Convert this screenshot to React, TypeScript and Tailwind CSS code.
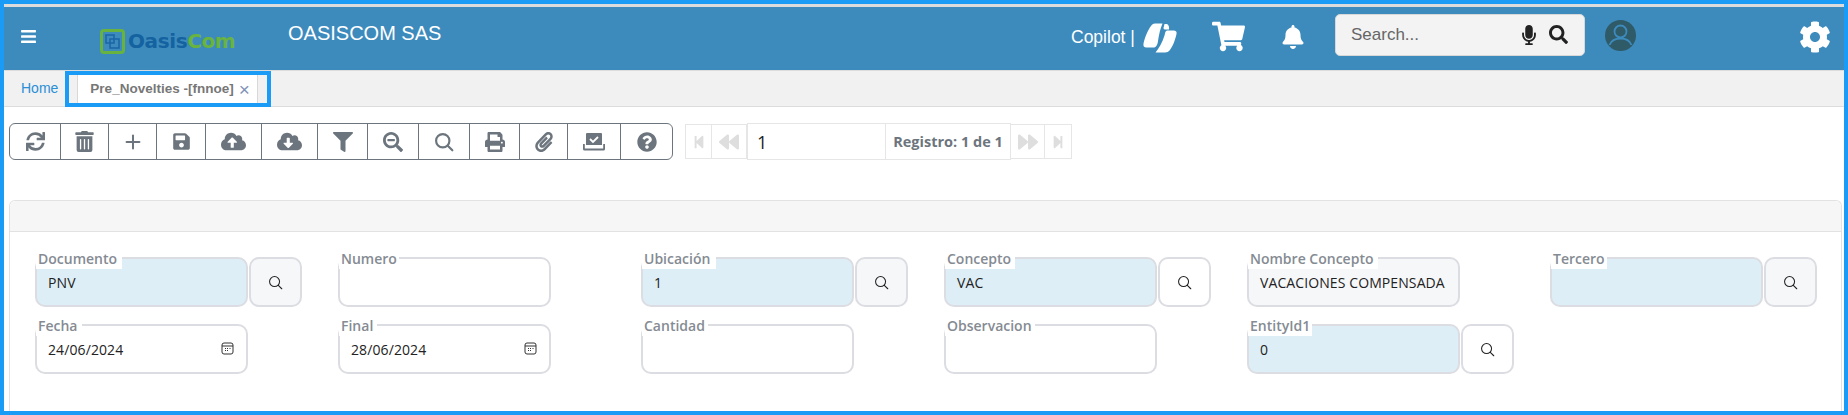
import React from "react";
import {
  FaBars, FaBell, FaShoppingCart, FaCog, FaSearch, FaMicrophone, FaSync, FaTrashAlt, FaSave,
  FaCloudUploadAlt, FaCloudDownloadAlt, FaFilter, FaSearchMinus, FaPrint, FaPaperclip, FaQuestionCircle,
  FaStepBackward, FaBackward, FaForward, FaStepForward,
} from "react-icons/fa";
import { Plus } from "lucide-react";

const Loupe = ({ size = 16, w = 2.4 }: { size?: number; w?: number }) => (
  <svg width={size} height={size} viewBox="0 0 24 24" fill="none" stroke="currentColor" strokeWidth={w} strokeLinecap="round">
    <circle cx="10.5" cy="10.5" r="8" />
    <path d="M16.5 16.5 22 22" />
  </svg>
);

const CheckTray = () => (
  <svg width="24" height="20" viewBox="0 0 24 20" fill="currentColor">
    <path d="M5 1h14a1 1 0 0 1 1 1v11H4V2a1 1 0 0 1 1-1z" />
    <path d="M8 7l3 3 5-5" fill="none" stroke="#fff" strokeWidth="1.8" />
    <path d="M1 12v5a1.5 1.5 0 0 0 1.5 1.5h19A1.5 1.5 0 0 0 23 17v-5h-1.8v4.5H2.8V12z" />
  </svg>
);

const Calendar = () => (
  <svg width="13" height="13" viewBox="0 0 13 13" fill="none" stroke="#333" strokeWidth="1">
    <rect x="1" y="1" width="11" height="11" rx="2" />
    <path d="M1 4h11" />
    <path d="M4 6.5h1M6 6.5h1M8.5 6.5h1M4 8.5h1M6 8.5h1" strokeWidth="1.2" />
  </svg>
);

const Copilot = () => (
  <svg width="34" height="30" viewBox="0 0 34 30" fill="#fff">
    <path d="M8 3C9 1.500 10 .5 12 .5h7.500C17.500 5 16 11 15 18c-.5 4-2 6.500-4.500 6.500H3.500C1 24.500 0 23 .5 20.500 2 13.500 5 7 8 3z" />
    <path d="M24 7.500h6.500c2.500 0 3.500 1.500 3 3.500-1.500 6.500-4 13-7 16.500-1 1.200-2.500 2-4.500 2h-9.500c3-4 7-10 9-17 .5-2.500 1-5 2.500-5z" />
    <path d="M21.500 1H23c2 0 3.500 2 3 5.500h-3.500c-1 0-2 0-2-1.500z" />
  </svg>
);

const User = () => (
  <svg width="31" height="31" viewBox="0 0 31 31">
    <circle cx="15.5" cy="15.5" r="15.5" fill="#2f5a68" />
    <circle cx="15.5" cy="11.5" r="6" fill="none" stroke="#3d8bbd" strokeWidth="1.8" />
    <path d="M4.5 25c2-5 6-6.500 11-6.500s9 1.500 11 6.500" fill="none" stroke="#3d8bbd" strokeWidth="1.8" />
  </svg>
);

const tools: [number, React.ReactNode][] = [
  [51, <FaSync size={19} />],
  [48, <FaTrashAlt size={21} />],
  [48, <Plus size={22} strokeWidth={2.2} />],
  [49, <FaSave size={19} />],
  [56, <FaCloudUploadAlt size={25} />],
  [56, <FaCloudDownloadAlt size={25} />],
  [50, <FaFilter size={20} />],
  [51, <FaSearchMinus size={20} />],
  [51, <Loupe size={20} w={2.6} />],
  [50, <FaPrint size={20} />],
  [48, <FaPaperclip size={20} />],
  [53, <CheckTray />],
  [51, <FaQuestionCircle size={20} />],
];

type F = { label: string; value?: string; blue?: boolean; gray?: boolean; search?: boolean; btnGray?: boolean; date?: boolean; labelW: number };

const rows: (F | null)[] = [
  { label: "Documento", value: "PNV", blue: true, search: true, btnGray: true, labelW: 86 },
  { label: "Numero", labelW: 60 },
  { label: "Ubicación", value: "1", blue: true, search: true, btnGray: true, labelW: 74 },
  { label: "Concepto", value: "VAC", blue: true, search: true, labelW: 70 },
  { label: "Nombre Concepto", value: "VACACIONES COMPENSADA", gray: true, labelW: 130 },
  { label: "Tercero", blue: true, search: true, btnGray: true, labelW: 56 },
  { label: "Fecha", value: "24/06/2024", date: true, labelW: 46 },
  { label: "Final", value: "28/06/2024", date: true, labelW: 38 },
  { label: "Cantidad", labelW: 66 },
  { label: "Observacion", labelW: 90 },
  { label: "EntityId1", value: "0", blue: true, search: true, labelW: 64 },
  null,
];

function Field({ f }: { f: F }) {
  return (
    <div className="flex">
      <div
        className={`relative flex h-[50px] w-[213px] items-center overflow-hidden rounded-[10px] border-2 border-[#dcdde2] pl-[11px] ${
          f.blue ? "bg-[#deeef6]" : f.gray ? "bg-[#f6f7f9]" : "bg-white"
        }`}
      >
        <span className="whitespace-nowrap pt-[1px] text-[14px] tracking-[0.1px] text-[#222]">{f.value}</span>
        {f.date && (
          <span className="absolute right-[12px] top-[16px]">
            <Calendar />
          </span>
        )}
      </div>
      <span className="absolute left-[1px] top-[-1px] h-[13px] bg-white" style={{ width: f.labelW }} />
      <span className="absolute left-[3px] top-[-8px] text-[14px] font-semibold leading-[20px] text-[#858b93]">{f.label}</span>
      {f.search && (
        <div
          className={`ml-[1px] flex h-[50px] w-[53px] items-center justify-center rounded-[10px] border-2 border-[#dcdde2] text-[#222] ${
            f.btnGray ? "bg-[#f6f7f9]" : "bg-white"
          }`}
        >
          <Loupe size={15} w={1.7} />
        </div>
      )}
    </div>
  );
}

export default function App() {
  return (
    <div className="flex h-[415px] w-[1848px] flex-col overflow-hidden border-4 border-[#1a9bf5] bg-white font-['Open_Sans',sans-serif]">
      <div className="h-[3px] bg-[#dcdcdc]" />
      <header className="flex h-[63px] items-center bg-[#3d8bbd] pl-[16px] text-white">
        <FaBars size={17} className="mr-[63px] mt-[-4px]" />
        <div className="mr-[52px] mt-[5px] flex w-[136px] items-center">
          <div className="mr-[3px] flex h-[25px] w-[25px] shrink-0 items-center justify-center rounded-[4px] border-[3px] border-[#68b23f]">
            <svg width="15" height="15" viewBox="0 0 15 15" fill="none" stroke="#1c66a8" strokeWidth="1.6">
              <rect x="1" y="1" width="8" height="8" />
              <rect x="5" y="5" width="9" height="9" />
            </svg>
          </div>
          <span className="font-['DejaVu_Sans',sans-serif] text-[20px] font-bold leading-none tracking-[-0.4px]">
            <span className="text-[#14629f]">Oasis</span>
            <span className="text-[#69b340]">Com</span>
          </span>
        </div>
        <div className="mt-[-12px] w-[783px] font-['Liberation_Sans',sans-serif] text-[20px]">OASISCOM SAS</div>
        <div className="mt-[-2px] flex w-[141px] items-center font-['Liberation_Sans',sans-serif] text-[17.5px]">
          <span className="mr-[8px]">Copilot |</span>
          <Copilot />
        </div>
        <FaShoppingCart size={33} className="mr-[36px] mt-[-4px]" />
        <FaBell size={24} className="mr-[30px] mt-[-4px]" />
        <div className="mb-[8px] flex h-[42px] w-[250px] items-center rounded-[5px] border border-[#d8d8d8] bg-[#f3f3f3] pl-[15px] pr-[16px] text-[#222]">
          <span className="flex-1 font-['Liberation_Sans',sans-serif] text-[17px] text-[#666]">Search...</span>
          <FaMicrophone size={20} className="mr-[10px]" />
          <FaSearch size={19} />
        </div>
        <div className="mb-[6px] ml-[20px] mr-[163px]">
          <User />
        </div>
        <FaCog size={32} className="mt-[-4px]" />
      </header>
      <div className="h-px bg-[#dcdcdc]" />
      <nav className="flex h-[36px] border-b border-[#dcdcdc] bg-[#f1f1f1] font-['Liberation_Sans',sans-serif]">
        <a className="ml-[17px] mr-[7px] flex items-center pb-[1px] text-[14px] text-[#2a8fd6]">Home</a>
        <div className="flex h-[36px] w-[206px] border-4 border-[#1a9bf5] pl-[8px] pr-[9px]">
          <div className="flex flex-1 items-center border-x border-[#d8d8d8] bg-white pl-[12px] text-[#777]">
            <span className="text-[13.5px] font-bold">Pre_Novelties -[fnnoe]</span>
            <span className="ml-[5px] text-[19px] leading-none text-[#7f93b8]">×</span>
          </div>
        </div>
      </nav>
      <div className="flex flex-1 flex-col bg-white pl-[5px] pr-[2px] pt-[16px]">
        <div className="flex items-center">
          <div className="flex h-[37px] rounded-[6px] border border-[#6c757d] text-[#6c757d]">
            {tools.map(([w, icon], i) => (
              <div
                key={i}
                style={{ width: w }}
                className={`flex items-center justify-center ${i < tools.length - 1 ? "border-r border-[#6c757d]" : ""}`}
              >
                {icon}
              </div>
            ))}
          </div>
          <div className="ml-[12px] flex items-center text-[#dedede]">
            <div className="flex h-[35px] w-[27px] items-center justify-center border border-[#e6e6e6]">
              <FaStepBackward size={14} />
            </div>
            <div className="flex h-[35px] w-[35px] items-center justify-center border border-l-0 border-[#e6e6e6]">
              <FaBackward size={20} />
            </div>
            <div className="flex h-[37px] w-[139px] items-center border border-[#e6e6e6] pl-[9px] pt-[2px] text-[18px] text-[#222]">1</div>
            <div className="flex h-[37px] w-[125px] items-center justify-center border border-l-0 border-[#e6e6e6] text-[14.5px] font-bold text-[#6c757d]">
              Registro: 1 de 1
            </div>
            <div className="flex h-[35px] w-[34px] items-center justify-center border border-l-0 border-[#e6e6e6]">
              <FaForward size={20} />
            </div>
            <div className="flex h-[35px] w-[27px] items-center justify-center border border-l-0 border-[#e6e6e6]">
              <FaStepForward size={14} />
            </div>
          </div>
        </div>
        <section className="mt-[40px] flex flex-1 flex-col rounded-t-[6px] border-x border-t border-[#e2e2e2]">
          <div className="h-[31px] shrink-0 rounded-t-[6px] border-b border-[#e2e2e2] bg-[#f6f6f6]" />
          <div className="grid flex-1 grid-cols-[repeat(6,303px)] content-start gap-y-[17px] pl-[25px] pt-[25px]">
            {rows.map((f, i) => (
              <div key={i} className="relative">
                {f && <Field f={f} />}
              </div>
            ))}
          </div>
        </section>
      </div>
    </div>
  );
}
